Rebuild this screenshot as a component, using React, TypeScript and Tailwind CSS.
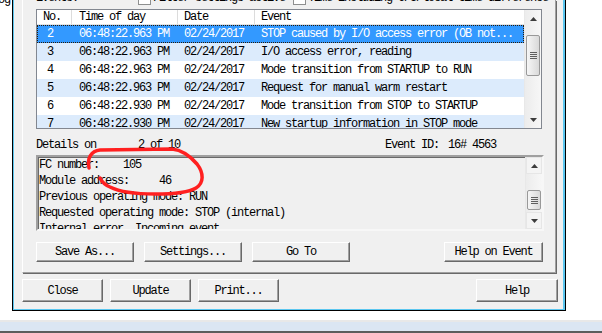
import React from 'react';

const rows = [
  { no: '2', time: '06:48:22.963 PM', date: '02/24/2017', event: 'STOP caused by I/O access error (OB not...' },
  { no: '3', time: '06:48:22.963 PM', date: '02/24/2017', event: 'I/O access error, reading' },
  { no: '4', time: '06:48:22.963 PM', date: '02/24/2017', event: 'Mode transition from STARTUP to RUN' },
  { no: '5', time: '06:48:22.963 PM', date: '02/24/2017', event: 'Request for manual warm restart' },
  { no: '6', time: '06:48:22.930 PM', date: '02/24/2017', event: 'Mode transition from STOP to STARTUP' },
  { no: '7', time: '06:48:22.930 PM', date: '02/24/2017', event: 'New startup information in STOP mode' },
];

const details = [
  'FC number:    105',
  'Module address:     46',
  'Previous operating mode: RUN',
  'Requested operating mode: STOP (internal)',
  'Internal error, Incoming event',
];

function Arrow({ down }: { down?: boolean }) {
  return (
    <svg width="7" height="4" viewBox="0 0 7 4">
      <path d={down ? 'M0 0H7L3.5 4Z' : 'M0 4H7L3.5 0Z'} fill="#3c3c3c" />
    </svg>
  );
}

function ScrollBar({ thumb, faded }: { thumb: string; faded?: boolean }) {
  const btn = faded
    ? 'flex h-[17px] shrink-0 items-center justify-center border border-[#e6e6e6] bg-[#f4f4f4]'
    : 'flex h-[17px] shrink-0 items-center justify-center';
  return (
    <div className="flex w-[17px] shrink-0 flex-col border-l border-[#e8e8e8] bg-linear-to-r from-[#ececec] to-[#f7f7f7]">
      <div className={btn}>
        <Arrow />
      </div>
      <div className="flex-1">
        <div
          className={`mx-[1px] flex flex-col items-center justify-center gap-[1px] rounded-[2px] border border-[#999999] bg-linear-to-r from-[#f6f6f6] to-[#d9d9d9] ${thumb}`}
        >
          <div className="h-[1px] w-[7px] bg-[#5f5f5f]" />
          <div className="h-[1px] w-[7px] bg-[#5f5f5f]" />
          <div className="h-[1px] w-[7px] bg-[#5f5f5f]" />
          <div className="h-[1px] w-[7px] bg-[#5f5f5f]" />
        </div>
      </div>
      <div className={btn}>
        <Arrow down />
      </div>
    </div>
  );
}

function Btn({ label, className }: { label: string; className: string }) {
  return (
    <button
      className={`flex items-center justify-center border border-t-white border-l-white border-r-[#696969] border-b-[#696969] bg-[#f0f0f0] shadow-[inset_-1px_-1px_0_#a0a0a0] ${className}`}
    >
      {label}
    </button>
  );
}

function CheckBox() {
  return <div className="h-[13px] w-[13px] shrink-0 border border-[#8e8f8f] bg-white" />;
}

export default function App() {
  return (
    <div className="relative flex h-[333px] w-[602px] flex-col overflow-hidden bg-white font-['Liberation_Mono',monospace] text-[12px] leading-[12px] tracking-[-1.2px] text-black">
      <div className="flex h-[311px] shrink-0">
        <div className="w-[12px] overflow-hidden">
          <div className="-mt-[6px] -ml-[8px] whitespace-nowrap">Log</div>
        </div>

        {/* dialog window */}
        <div className="w-[554px] border-x border-b border-black">
          <div className="flex h-full flex-col border-b border-l border-r-2 border-[#5bc6ef] bg-[#f0f0f0] pl-[8px] pr-[5px]">
            {/* tab page */}
            <div className="flex h-[273px] w-[534px] shrink-0 flex-col border-b border-l border-r border-b-[#a0a0a0] border-l-white border-r-[#a0a0a0] pl-[13px] shadow-[1px_1px_0_#696969]">
              <div className="-mt-[11px] mb-[2px] flex h-[18px] items-center">
                <span className="w-[102px]">Events:</span>
                <CheckBox />
                <span className="ml-[2px] w-[140px] whitespace-nowrap">Filter settings active</span>
                <CheckBox />
                <span className="ml-[2px] whitespace-nowrap">Time including CPU/local time difference</span>
              </div>

              {/* event list */}
              <div className="flex h-[120px] w-[506px] shrink-0 border border-[#828790] bg-white">
                <div className="flex w-[487px] flex-col overflow-hidden">
                  <div className="flex h-[15px] shrink-0 items-center border-b border-[#e2e2e2]">
                    <div className="h-full w-[35px] border-r border-[#dcdcdc] pl-[6px] pt-[1px]">No.</div>
                    <div className="h-full w-[106px] border-r border-[#dcdcdc] pl-[7px] pt-[1px]">Time of day</div>
                    <div className="h-full w-[77px] border-r border-[#dcdcdc] pl-[6px] pt-[1px]">Date</div>
                    <div className="h-full flex-1 pl-[6px] pt-[1px]">Event</div>
                  </div>
                  {rows.map((r, i) => (
                    <div
                      key={r.no}
                      className={`flex h-[18px] shrink-0 items-center whitespace-nowrap ${
                        i === 0
                          ? 'bg-[#3399ff] text-white outline-1 -outline-offset-1 outline-dotted outline-[#2b1a05]'
                          : i % 2 === 1
                            ? 'bg-[#dcebfc]'
                            : 'bg-white'
                      }`}
                    >
                      <div className="w-[35px] pl-[10px]">{r.no}</div>
                      <div className="w-[106px] pl-[7px]">{r.time}</div>
                      <div className="w-[77px] pl-[6px]">{r.date}</div>
                      <div className="flex-1 pl-[6px]">{r.event}</div>
                    </div>
                  ))}
                </div>
                <ScrollBar thumb="mt-[8px] h-[41px]" />
              </div>

              <div className="flex h-[26px] shrink-0 items-center whitespace-pre pt-[5px]">
                <span className="w-[102px]">Details on</span>
                <span className="w-[247px]">2 of 10</span>
                <span className="w-[63px]">Event ID:</span>
                <span>16# 4563</span>
              </div>

              {/* details */}
              <div className="flex h-[76px] w-[508px] shrink-0 border-2 border-b-[#f7f7f7] border-l-[#a0a0a0] border-r-[#f7f7f7] border-t-[#a0a0a0] bg-[#f0f0f0] shadow-[inset_1px_1px_0_#696969]">
                <div className="flex-1 overflow-hidden whitespace-pre pl-[1px]">
                  {details.map((d) => (
                    <div key={d} className="flex h-[16px] items-center">
                      {d}
                    </div>
                  ))}
                </div>
                <ScrollBar thumb="mt-[16px] h-[20px]" faded />
              </div>

              <div className="mt-[11px] flex h-[20px] w-[507px] shrink-0 gap-[10px]">
                <Btn label="Save As..." className="w-[98px]" />
                <Btn label="Settings..." className="w-[98px]" />
                <Btn label="Go To" className="w-[98px]" />
                <Btn label="Help on Event" className="ml-auto w-[99px]" />
              </div>
            </div>

            <div className="mt-[6px] flex h-[23px] shrink-0 gap-[7px]">
              <Btn label="Close" className="w-[81px]" />
              <Btn label="Update" className="w-[81px]" />
              <Btn label="Print..." className="w-[81px]" />
              <Btn label="Help" className="ml-auto w-[82px]" />
            </div>
          </div>
        </div>
      </div>

      <div className="h-[9px] shrink-0 bg-white" />
      <div className="h-[2px] shrink-0 bg-[#e8e8e8]" />
      <div className="h-[9px] shrink-0 bg-[#dbe6f3]" />
      <div className="h-[2px] shrink-0 bg-[#5c5c5c]" />

      {/* red hand-drawn annotation */}
      <svg className="pointer-events-none absolute left-0 top-0" width="602" height="333" viewBox="0 0 602 333">
        <path
          d="M89 168 C87 158 91 151 100 150 L172 149 C182 150 191 157 197 164 C204 173 204 183 196 188 C188 193 172 194 155 194 C135 194 118 191 110 187 C105 185 102 182 100 178"
          fill="none"
          stroke="#ff2020"
          strokeWidth="3.5"
          strokeLinecap="round"
          strokeLinejoin="round"
        />
      </svg>
    </div>
  );
}
